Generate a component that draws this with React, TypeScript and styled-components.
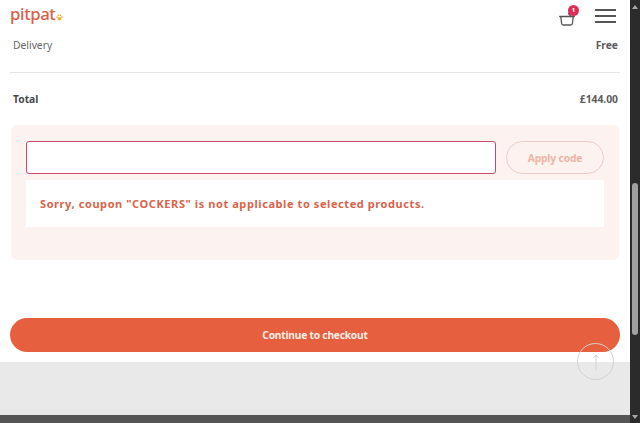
import * as React from 'react';
import styled, { createGlobalStyle } from 'styled-components';

const ORANGE = '#e66040';

const GlobalStyle = createGlobalStyle`
  html, body {
    margin: 0;
    padding: 0;
    height: 423px;
    overflow: hidden;
    background: #fff;
  }
  body {
    font-family: "Noto Sans", "Open Sans", sans-serif;
    color: #555;
  }
`;

const Shell = styled.div`
  display: flex;
  width: 640px;
  height: 423px;
`;

const Page = styled.main`
  position: relative;
  flex: 1;
  display: flex;
  flex-direction: column;
  min-width: 0;
`;

const Content = styled.div`
  flex: 1;
  padding: 0 10px;
`;

const Header = styled.header`
  display: flex;
  align-items: center;
  justify-content: space-between;
  height: 33px;
  margin-right: 4px;
`;

const Logo = styled.div`
  display: flex;
  align-items: flex-end;
  gap: 1px;
  margin-bottom: 5px;
  font-family: "Noto Sans", sans-serif;
  font-size: 16.8px;
  font-weight: 500;
  line-height: 20px;
  letter-spacing: -0.4px;
  color: #d9604c;
`;

const HeaderActions = styled.div`
  display: flex;
  align-items: center;
  gap: 20px;
`;

const Basket = styled.div`
  position: relative;
  width: 16px;
  height: 14px;
  margin-bottom: 1px;
`;

const Badge = styled.span`
  position: absolute;
  top: -4px;
  right: -4px;
  width: 11px;
  height: 11px;
  border-radius: 50%;
  background: #dc2f55;
  color: #fff;
  font-size: 6px;
  font-weight: 700;
  line-height: 11px;
  text-align: center;
`;

const Burger = styled.div`
  display: flex;
  flex-direction: column;
  gap: 4px;
  width: 21px;
  margin-bottom: 1px;
`;

const BurgerLine = styled.span`
  height: 2px;
  background: #555;
`;

const Row = styled.div<{ $bold?: boolean }>`
  display: flex;
  justify-content: space-between;
  align-items: center;
  height: 24px;
  padding: 0 2px 0 3px;
  font-size: 10.3px;
  font-weight: ${(p) => (p.$bold ? 700 : 400)};
  color: ${(p) => (p.$bold ? '#4a4a4a' : '#666')};
`;

const RowValue = styled.span`
  font-weight: 700;
  color: #5c5c5c;
`;

const Divider = styled.hr`
  margin: 15px 0 14px;
  border: 0;
  border-top: 1px solid #e4e4e4;
`;

const CouponPanel = styled.section`
  display: flex;
  flex-direction: column;
  gap: 6px;
  box-sizing: border-box;
  height: 135px;
  margin: 14px 1px 0 1px;
  padding: 16px 15px;
  border-radius: 6px;
  background: #fcf2ef;
`;

const CouponRow = styled.div`
  display: flex;
  gap: 10px;
`;

const CouponInput = styled.input`
  flex: 1;
  box-sizing: border-box;
  height: 33px;
  min-width: 0;
  border: 1px solid #c9486c;
  border-radius: 3px;
  background: #fff;
  outline: none;
`;

const ApplyButton = styled.button`
  box-sizing: border-box;
  width: 98px;
  height: 33px;
  border: 1px solid #ecccc4;
  border-radius: 17px;
  background: transparent;
  color: #eeb3a5;
  font-family: inherit;
  font-size: 10.3px;
  font-weight: 700;
  letter-spacing: -0.15px;
`;

const ErrorMessage = styled.div`
  display: flex;
  align-items: center;
  height: 47px;
  padding: 0 14px;
  background: #fff;
  color: #d9634a;
  font-size: 11px;
  font-weight: 700;
  letter-spacing: 0.58px;
`;

const CheckoutButton = styled.button`
  display: block;
  width: 610px;
  height: 34px;
  margin-top: 58px;
  border: 0;
  border-radius: 17px;
  background: ${ORANGE};
  color: #fdeee9;
  font-family: inherit;
  font-size: 10.2px;
  font-weight: 700;
  letter-spacing: -0.2px;
`;

const FooterBand = styled.div`
  height: 53px;
  background: #e9e9e9;
`;

const BottomBar = styled.div`
  height: 8px;
  background: #555;
`;

const ScrollTop = styled.button`
  position: absolute;
  left: 577px;
  top: 343px;
  display: flex;
  align-items: center;
  justify-content: center;
  box-sizing: border-box;
  width: 37px;
  height: 37px;
  padding: 0;
  border: 1px solid #d2d2d2;
  border-radius: 50%;
  background: transparent;
`;

const Scrollbar = styled.aside`
  position: relative;
  width: 10px;
  background: #2b2b2b;
`;

const ScrollThumb = styled.div`
  position: absolute;
  left: 2px;
  top: 183px;
  width: 6px;
  height: 152px;
  border-radius: 3px;
  background: #a0a0a0;
`;

const ScrollArrow = styled.span<{ $down?: boolean }>`
  position: absolute;
  left: 2px;
  ${(p) => (p.$down ? 'bottom: 4px;' : 'top: 5px;')}
  width: 0;
  height: 0;
  border-left: 3px solid transparent;
  border-right: 3px solid transparent;
  ${(p) => (p.$down ? 'border-top: 4px solid #a8a8a8;' : 'border-bottom: 4px solid #a8a8a8;')}
`;

function PawIcon() {
  return (
    <svg width="7" height="7" viewBox="0 0 14 14" fill="#eeb02f" style={{ marginBottom: 3 }}>
      <ellipse cx="7" cy="9.5" rx="4" ry="3.5" />
      <circle cx="2" cy="6" r="1.7" />
      <circle cx="5" cy="2.6" r="1.7" />
      <circle cx="9" cy="2.6" r="1.7" />
      <circle cx="12" cy="6" r="1.7" />
    </svg>
  );
}

function BasketIcon() {
  return (
    <svg width="16" height="14" viewBox="0 0 16 14" fill="none" stroke="#555" strokeWidth="1.3">
      <path d="M0.7 4.5H15.3" strokeLinecap="round" />
      <path d="M1.8 4.5L2.6 11.5Q2.8 13 4.2 13H11.8Q13.2 13 13.4 11.5L14.2 4.5" strokeLinejoin="round" />
      <path d="M9.5 1.5L12 4.5" strokeLinecap="round" />
    </svg>
  );
}

export default function App() {
  return (
    <Shell>
      <GlobalStyle />
      <Page>
        <Content>
          <Header>
            <Logo>
              pitpat
              <PawIcon />
            </Logo>
            <HeaderActions>
              <Basket>
                <BasketIcon />
                <Badge>1</Badge>
              </Basket>
              <Burger>
                <BurgerLine />
                <BurgerLine />
                <BurgerLine />
              </Burger>
            </HeaderActions>
          </Header>
          <Row>
            <span>Delivery</span>
            <RowValue>Free</RowValue>
          </Row>
          <Divider />
          <Row $bold>
            <span>Total</span>
            <RowValue>£144.00</RowValue>
          </Row>
          <CouponPanel>
            <CouponRow>
              <CouponInput />
              <ApplyButton>Apply code</ApplyButton>
            </CouponRow>
            <ErrorMessage>Sorry, coupon "COCKERS" is not applicable to selected products.</ErrorMessage>
          </CouponPanel>
          <CheckoutButton>Continue to checkout</CheckoutButton>
        </Content>
        <FooterBand />
        <BottomBar />
        <ScrollTop aria-label="Back to top">
          <svg width="8" height="16" viewBox="0 0 8 16" fill="none" stroke="#d4d4d4" strokeWidth="1">
            <path d="M4 16V1M1.5 4L4 1L6.5 4" />
          </svg>
        </ScrollTop>
      </Page>
      <Scrollbar>
        <ScrollArrow />
        <ScrollThumb />
        <ScrollArrow $down />
      </Scrollbar>
    </Shell>
  );
}
